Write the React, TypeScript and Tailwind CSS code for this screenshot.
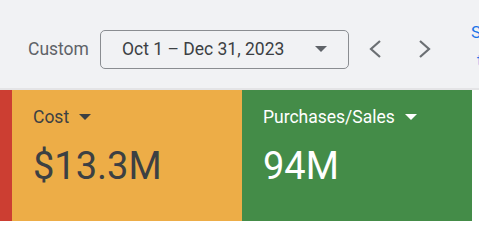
import React from "react";

function Caret({ className }: { className?: string }) {
  return (
    <svg width="12" height="6" viewBox="0 0 12 6" className={className}>
      <path d="M0 0 L12 0 L6 6 Z" fill="currentColor" />
    </svg>
  );
}

function Chevron({ dir }: { dir: "left" | "right" }) {
  return (
    <svg width="14" height="20" viewBox="0 0 14 20">
      <path
        d={dir === "left" ? "M12 2 L3 10 L12 18" : "M2 2 L11 10 L2 18"}
        fill="none"
        stroke="#6b6f73"
        strokeWidth="2.2"
      />
    </svg>
  );
}

export default function App() {
  return (
    <div
      className="w-[479px] h-[243px] overflow-hidden bg-white"
      style={{ fontFamily: "Roboto, 'Liberation Sans', sans-serif" }}
    >
      <div className="h-[90px] bg-[#f1f2f4] border-b-2 border-[#e4e4e6] flex items-center pl-[28px] pt-[10px] overflow-hidden">
        <span className="text-[17.5px] text-[#5f6368] w-[72px] shrink-0">Custom</span>
        <div className="w-[249px] h-[39px] shrink-0 border border-[#8a8d91] rounded-[5px] flex items-center pl-[21px] pr-[21px] justify-between">
          <span className="text-[17.5px] text-[#3c4043]">Oct 1 – Dec 31, 2023</span>
          <Caret className="text-[#5f6368]" />
        </div>
        <div className="ml-[19px] flex items-center gap-[36px] shrink-0">
          <Chevron dir="left" />
          <Chevron dir="right" />
        </div>
        <div className="ml-[39px] shrink-0 flex flex-col text-[#1a73e8] text-[17px] leading-[28px] whitespace-nowrap -mt-[6px]">
          <span>Se</span>
          <span className="pl-[6px]">t</span>
        </div>
      </div>
      <div className="flex h-[131px]">
        <div className="w-[12px] bg-[#cc3e32]" />
        <div className="w-[230px] bg-[#edad47] pl-[21px] pt-[17px] text-[#3c4043]">
          <div className="flex items-center gap-[10px] text-[17.5px] leading-[20px]">
            <span>Cost</span>
            <Caret />
          </div>
          <div className="text-[38px] leading-[44px] mt-[17px]">$13.3M</div>
        </div>
        <div className="w-[230px] bg-[#448c48] pl-[21px] pt-[17px] text-white">
          <div className="flex items-center gap-[10px] text-[17.5px] leading-[20px]">
            <span>Purchases/Sales</span>
            <Caret />
          </div>
          <div className="text-[38px] leading-[44px] mt-[17px]">94M</div>
        </div>
      </div>
    </div>
  );
}
